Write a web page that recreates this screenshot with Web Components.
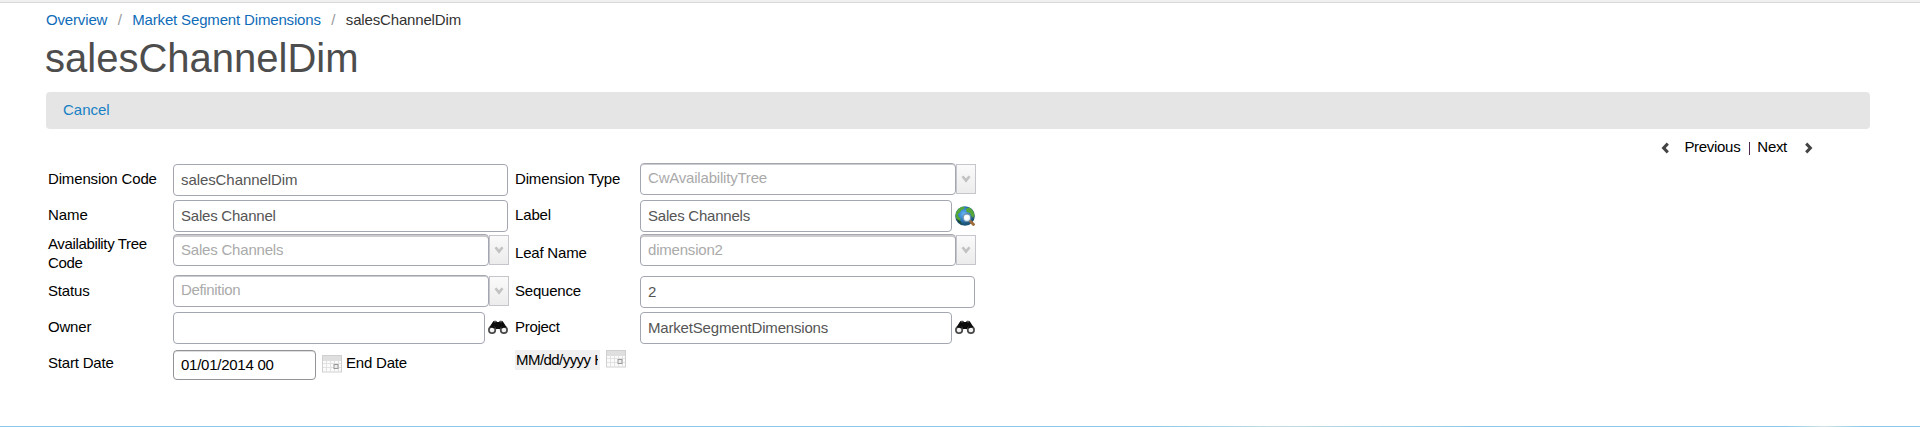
<!DOCTYPE html>
<html lang="en"><head><meta charset="utf-8"><title>salesChannelDim</title>
<style>html,body{margin:0;background:#fff}body{font:15px/19px "Liberation Sans",Arial,sans-serif;color:#000;height:427px;overflow:hidden}</style></head>
<body><dimension-page></dimension-page>
<script>
const define=(name,html,after)=>customElements.define(name,class extends HTMLElement{
  constructor(){super();this.attachShadow({mode:'open'}).innerHTML=html}
  connectedCallback(){if(after)after(this,this.shadowRoot)}
});
// "tight" sets the letter spacing of a text, in hundredths of a pixel
const tighten=el=>{if(el.hasAttribute('tight'))el.style.letterSpacing=-el.getAttribute('tight')/100+'px'};
define('crumb-trail',`<style>:host{display:flex;line-height:19px;color:#333;letter-spacing:-.16px}
::slotted(a){color:#0f6cb8}::slotted(i){font-style:normal;color:#999;width:25px;text-align:center}</style><slot></slot>`);
define('action-bar',`<style>:host{display:block;box-sizing:border-box;height:37px;border-radius:4px;background:#e5e5e5;padding:8px 17px;color:#1680c4}</style><slot></slot>`);
define('record-pager',`<style>:host{display:flex;align-items:flex-start;height:19px;letter-spacing:-.3px}svg{width:8px;height:12px;margin-top:5px}
.p{margin-left:15px}.bar{width:1px;height:13px;background:#502850;margin:5px 7px 0 9px}.n{margin-right:18px}path{fill:none;stroke:#444;stroke-width:3}</style>
<svg viewBox="0 0 8 12"><path d="M6.8 1.6 2.6 6l4.2 4.4"/></svg><span class="p">Previous</span><span class="bar"></span><span class="n">Next</span><svg viewBox="0 0 8 12"><path d="M1.2 1.6 5.4 6l-4.2 4.4"/></svg>`);
define('field-label',`<style>:host{display:block;letter-spacing:-.15px}</style><slot></slot>`,tighten);
define('text-field',`<style>:host{display:block;box-sizing:border-box;width:335px;height:32px;border:1px solid #a4a7b2;border-radius:4px;padding:5px 7px;color:#555;white-space:nowrap}
:host([short]){width:312px}:host([date]){width:143px;height:30px;padding:4px 7px;border-color:#929298;box-shadow:inset 0 1px #ddd;color:#000}</style><slot></slot>`,tighten);
define('select-field',`<style>:host{display:flex;width:336px;align-items:flex-start}
.v{box-sizing:border-box;width:316px;height:32px;border:1px solid #a4a7b2;border-radius:4px;padding:4px 7px;color:#aaa;box-shadow:inset 0 1px #ccc}
:host([deep]) .v{box-shadow:inset 0 2px #ccc;padding-top:5px}
.b{box-sizing:border-box;width:20px;height:30px;margin-top:1px;border:1px solid #c5c6cc;background:linear-gradient(#fafafa,#ececec);display:flex;align-items:center;justify-content:center}</style>
<div class="v"><slot></slot></div><div class="b"><svg width="10" height="8"><path d="M1.5 1.2 5 5.6 8.5 1.2" fill="none" stroke="#c2c2c2" stroke-width="2.6"/></svg></div>`,tighten);
define('find-icon',`<style>:host{display:block;width:20px;height:15px}</style><svg width="20" height="15" viewBox="0 0 20 15">
<path d="M4.6 2.2Q5.5.4 8.6 1v1h2.8V1Q14.5.4 15.4 2.2L19.4 8.5 12.6 10 11.6 9H8.4l-1 1L.6 8.5Z" fill="#0c0c0c"/><path d="M6 1.8h2M12 1.8h2" stroke="#777"/><circle cx="4.1" cy="10" r="3.2" fill="#f2f2f2" stroke="#484848" stroke-width="1.7"/><circle cx="15.9" cy="10" r="3.2" fill="#f2f2f2" stroke="#484848" stroke-width="1.7"/><path d="M2.2 7.2Q4 5.8 6.5 7.8M17.8 7.2Q16 5.8 13.5 7.8" fill="none" stroke="#0c0c0c" stroke-width="1.6"/></svg>`);
define('globe-icon',`<style>:host{display:block;width:20px;height:20px}</style><svg width="20" height="20" viewBox="0 0 20 20"><defs><radialGradient id="g" cx=".45" cy=".4"><stop stop-color="#6cb8f4"/><stop offset=".6" stop-color="#2f80cc"/><stop offset="1" stop-color="#1d5478"/></radialGradient></defs>
<circle cx="10" cy="10" r="9.8" fill="url(#g)"/><path d="M1 7Q3 1.5 8.5.6L10 2 8 3.5 6.5 4 5 6.5 3 8 3.5 10.5 5.5 12.5 5 16Q1 13.5.6 9.5ZM11 3l3-1.8Q18.5 4 19.4 9l-1 3-2-2L15 7 11.5 6Z" fill="#55a838"/><path d="M1.5 13Q3 17 7 18.9L5.5 15Z" fill="#1c4a38"/>
<path d="m14.6 14.6 4.8 4.8" stroke="#a06c3a" stroke-width="2.8"/><circle cx="11.9" cy="11.7" r="3.8" fill="#dceffc" stroke="#6c8ca2" stroke-width="1.2"/><circle cx="11.7" cy="11.4" r="2.3" fill="#fff"/></svg>`);
define('calendar-icon',`<style>:host{display:block;width:20px;height:18px}</style><svg width="20" height="18"><rect x=".5" y=".5" width="19" height="16.5" fill="#fbfbfb" stroke="#d0d0d0"/><path d="M1 1h18v5H1Z" fill="#dfdfdf"/><path d="M1 8.5h18M1 12.5h18M4.5 6v11M8.5 6v11M12.5 6v11M16.5 6v11" stroke="#e2e2e2"/><rect x="12" y="9.5" width="4" height="4" fill="#eee" stroke="#999"/></svg>`);
define('form-cell',`<style>:host{display:flex;align-items:flex-start;box-sizing:border-box;min-width:0}</style><slot></slot>`,
 el=>{el.style.paddingTop=(el.getAttribute('drop')||0)+'px'});
define('dimension-form',`<style>:host{display:grid;grid-template-columns:125px 342px 125px 342px;grid-template-rows:36px 36px 40px 36px 36px 36px;padding-left:2px}
find-icon{margin:8px 0 0 3px}globe-icon{margin:6px 0 0 3px}.end{margin:3px 0 0 4px}.start{margin:5px 0 0 6px}.hint{box-sizing:border-box;width:85px;height:20px;background:#f0f0f0;padding-left:1px;white-space:nowrap;letter-spacing:-.55px}.hint span{display:block;width:82px;overflow:hidden}.hint+calendar-icon{margin-left:6px}</style>
<form-cell drop="7"><field-label>Dimension Code</field-label></form-cell><form-cell drop="2"><text-field tight="8">salesChannelDim</text-field></form-cell>
<form-cell drop="7"><field-label>Dimension Type</field-label></form-cell><form-cell drop="1"><select-field tight="20">CwAvailabilityTree</select-field></form-cell>
<form-cell drop="7"><field-label tight="5">Name</field-label></form-cell><form-cell drop="2"><text-field tight="22">Sales Channel</text-field></form-cell>
<form-cell drop="7"><field-label>Label</field-label></form-cell><form-cell drop="2"><text-field short tight="22">Sales Channels</text-field><globe-icon></globe-icon></form-cell>
<form-cell><field-label tight="36">Availability Tree<br>Code</field-label></form-cell><form-cell><select-field deep tight="20">Sales Channels</select-field></form-cell>
<form-cell drop="9"><field-label tight="20">Leaf Name</field-label></form-cell><form-cell><select-field deep tight="20">dimension2</select-field></form-cell>
<form-cell drop="7"><field-label>Status</field-label></form-cell><form-cell drop="1"><select-field tight="34">Definition</select-field></form-cell>
<form-cell drop="7"><field-label tight="20">Sequence</field-label></form-cell><form-cell drop="2"><text-field>2</text-field></form-cell>
<form-cell drop="7"><field-label tight="20">Owner</field-label></form-cell><form-cell drop="2"><text-field short></text-field><find-icon></find-icon></form-cell>
<form-cell drop="7"><field-label tight="30">Project</field-label></form-cell><form-cell drop="2"><text-field short tight="18">MarketSegmentDimensions</text-field><find-icon></find-icon></form-cell>
<form-cell drop="7"><field-label tight="20">Start Date</field-label></form-cell><form-cell drop="4"><text-field date tight="26">01/01/2014 00</text-field><calendar-icon class="start"></calendar-icon><field-label class="end" tight="20">End Date</field-label></form-cell>
<form-cell drop="4"><div class="hint"><span>MM/dd/yyyy H</span></div><calendar-icon></calendar-icon></form-cell>`);
define('dimension-page',`<style>:host{display:flex;flex-direction:column;box-sizing:border-box;height:427px;padding:10px 50px 0 46px;
background:linear-gradient(#f0f0f0 2px,#d9d9d9 2px) top/100% 3px no-repeat,linear-gradient(90deg,#89c8e8 60%,#c5dce5 66.5%,#89c8e8 77%,#89c8e8 93%,#d2e2e6 95%,#89c8e8 97%) bottom/100% 1px no-repeat}
h1{margin:6px 0 0 -1px;font-size:40px;font-weight:400;line-height:46px;color:#4d4d4d}action-bar{margin-top:11px}record-pager{align-self:flex-end;margin:8px 57px 0 0}dimension-form{margin-top:6px}</style>
<crumb-trail><a>Overview</a><i>/</i><a>Market Segment Dimensions</a><i>/</i><span>salesChannelDim</span></crumb-trail><h1>salesChannelDim</h1><action-bar>Cancel</action-bar><record-pager></record-pager><dimension-form></dimension-form>`);
</script></body></html>
